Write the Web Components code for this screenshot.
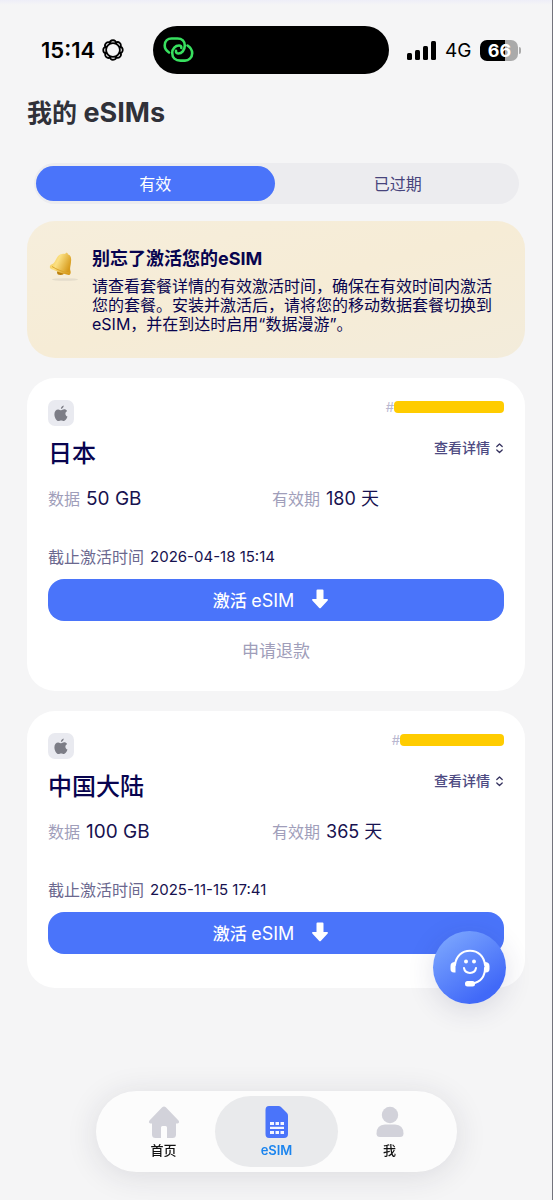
<!DOCTYPE html>
<html lang="zh-CN">
<head>
<meta charset="utf-8">
<meta name="viewport" content="width=device-width, initial-scale=1">
<title>我的 eSIMs</title>
<style>
body { margin: 0; background: #f5f5f6; font-family: Inter, "Noto Sans CJK SC", sans-serif; color: #08044f; }
</style>
</head>
<body>
<esim-app></esim-app>
<script>
const define = (name, html, setup) => {
  const template = document.createElement('template');
  template.innerHTML = html;
  customElements.define(name, class extends HTMLElement {
    constructor() {
      super();
      this.attachShadow({ mode: 'open' }).append(template.content.cloneNode(true));
    }
    connectedCallback() { if (setup) setup(this, this.shadowRoot); }
  });
};

define('status-bar', `
<style>
:host { display: grid; grid-template-columns: 1fr 236px 163px; align-items: center; height: 48px; padding: 26px 0 0; color: #000; }
.left, .right { display: flex; align-items: center; }
.left { padding-left: 41px; gap: 7px; font-size: 22px; font-weight: 600; }
.island { height: 48px; border-radius: 24px; background: #000; display: flex; align-items: center; padding-left: 10px; box-sizing: border-box; }
.right { padding-left: 18px; gap: 9px; font-size: 19px; }
.battery { display: flex; align-items: center; gap: 1px; }
.level { width: 38px; height: 21px; line-height: 21px; border-radius: 7px; background: linear-gradient(90deg, #000 66%, #aaa 66%); color: #fff; font-size: 18px; font-weight: 700; text-align: center; }
.cap { width: 2px; height: 7px; border-radius: 0 2px 2px 0; background: #aaa; }
svg { display: block; flex: none; }
</style>
<div class="left"><span>15:14</span>
<svg width="22" height="22" viewBox="-11 -11 22 22" fill="none" stroke="#000" stroke-width="1.8"><circle r="6.900"/><g id="ring"></g></svg></div>
<div class="island"><svg width="32" height="28" viewBox="0 0 32 28" fill="none" stroke="#38e05f" stroke-width="2.6" stroke-linecap="round"><path d="M6 16.500C3 14.500 1.700 11.500 1.700 9.500C1.700 5 5 2.500 8.500 2.500H14.500C19 2.500 21.800 5.500 21.800 9.500C21.800 14.500 18.500 17.500 15.500 17.500C13.800 17.500 12.800 16.500 13 14.800"/><path d="M24.500 9.500C27.500 11.500 29.200 14 29.200 17.200C29.200 21.800 25.500 24.600 22 24.600H17.500C12.500 24.600 9.200 21.500 9.200 17C9.200 12.500 12.500 9.500 16 9.500C17.800 9.500 18.500 10.500 18.300 12"/></svg></div>
<div class="right">
<svg width="29" height="19" viewBox="0 0 29 19"><rect y="12" width="5" height="7" rx="1.500"/><rect x="8" y="9" width="5" height="10" rx="1.500"/><rect x="16" y="5" width="5" height="14" rx="1.500"/><rect x="24" width="5" height="19" rx="1.500"/></svg>
<span>4G</span>
<div class="battery"><span class="level">66</span><span class="cap"></span></div>
</div>`, (host, root) => {
  const ns = 'http://www.w3.org/2000/svg';
  const ring = root.getElementById('ring');
  for (let i = 0; i < 8; i++) {
    const lobe = document.createElementNS(ns, 'path');
    lobe.setAttribute('d', 'M-3.400 -6C-3.400 -11 3.400 -11 3.400 -6');
    lobe.setAttribute('transform', 'rotate(' + i * 45 + ')');
    ring.append(lobe);
  }
});

define('segment-tabs', `
<style>
:host { display: block; margin: 0 6px 0 7px; }
div { display: grid; grid-template-columns: 1fr 1fr; gap: 4px; padding: 3px 2px; border-radius: 21px; background: #ececef; }
button { height: 35px; border: 0; border-radius: 18px; padding: 0 0 2px; background: none; font: inherit; font-size: 16px; color: #47447c; }
button[aria-selected=true] { background: #4a74fa; color: #fff; }
</style>
<div role="tablist"><button role="tab" aria-selected="true">有效</button><button role="tab" aria-selected="false">已过期</button></div>`,
(host, root) => {
  const tabs = [...root.querySelectorAll('button')];
  tabs.forEach(t => t.onclick = () => tabs.forEach(o => o.setAttribute('aria-selected', o === t)));
});

define('notice-card', `
<style>
:host { display: grid; grid-template-columns: 32px 1fr; gap: 12px; padding: 27px 21px 24px; border-radius: 28px; background: linear-gradient(165deg, #f6eedc, #f6ecd6 50%, #f3ecdb); }
svg { margin-top: 3px; }
h2 { margin: 0 0 7px; font-size: 18px; line-height: 22px; font-weight: 700; }
p { margin: 0; font-size: 16px; line-height: 19px; }
</style>
<svg width="32" height="32" viewBox="0 0 32 32"><defs><linearGradient id="g" x1="0" x2="1" y1="0" y2=".5"><stop offset="0" stop-color="#f0c040"/><stop offset=".45" stop-color="#fbe083"/><stop offset="1" stop-color="#d79b1c"/></linearGradient></defs>
<ellipse cx="17" cy="28.500" rx="13" ry="1.300" fill="#e4dccb"/><ellipse cx="12.500" cy="21.500" rx="3.500" ry="2.500" fill="#bc810f"/>
<path d="M17.300 3C17.300 1 20 1.400 19.800 3.300C23 4.500 23.500 7 23 11C22.700 15 21.500 17.500 22.500 20C23 21.500 22.600 24.600 20.500 24C14 22.500 8 20 3 18C1 17 1.800 14 3.500 13.500C6.500 12.500 7 10 8.500 7.500C11 3 14 2 17.300 3Z" fill="url(#g)"/><path d="M4 15.500C9 18.500 14 20.800 21 22" stroke="#dca52b" stroke-width="1" fill="none"/></svg>
<div><h2><slot name="title"></slot></h2><p><slot></slot></p></div>`);

define('esim-card', `
<style>
:host { display: block; padding: 22px 21px 34px; border-radius: 28px; background: #fff; }
:host([refundable]) { padding-bottom: 28px; }
.top, .name, .date, .order { display: flex; }
.top, .name { justify-content: space-between; align-items: flex-start; }
.apple { width: 26px; height: 26px; border-radius: 7px; background: #e9eaf0; display: grid; place-items: center; }
.order { align-items: center; height: 14px; font-size: 13px; color: #b9b7d0; }
.mask { width: var(--mask, 110px); height: 12px; border-radius: 4px; background: #fc0; }
h2 { margin: 0; font-size: 24px; line-height: 32px; font-weight: 500; }
.name { margin-top: 12px; }
button { font: inherit; border: 0; padding: 0; background: none; display: flex; align-items: center; }
.more { gap: 5px; font-size: 14px; font-weight: 500; line-height: 20px; color: #4d4a82; }
dl { display: grid; grid-template-columns: 224px 1fr; margin: 17px 0 0; font-size: 18px; line-height: 24px; }
dl div { display: flex; align-items: center; gap: 6px; }
dt { font-size: 16px; color: #a09eba; }
dd { margin: 0; color: #17124f; }
.volume { font-size: 19px; }
.date { align-items: center; gap: 6px; margin-top: 34px; font-size: 16px; line-height: 24px; color: #6b688f; }
time { font-size: 15px; color: #17124f; }
.go { width: 100%; height: 42px; margin-top: 10px; padding: 0 10px 2px 0; box-sizing: border-box; justify-content: center; gap: 17px; border-radius: 16px; background: #4a74fa; color: #fff; font-size: 17px; font-weight: 500; }
.go .latin { font-size: 18px; font-weight: 400; }
.refund { display: none; margin: 18px auto 0; font-size: 17px; line-height: 24px; color: #a09eba; }
:host([refundable]) .refund { display: block; }
</style>
<div class="top"><span class="apple"><svg width="14" height="17" viewBox="0 0 14 17" fill="#7c7d86"><path d="M9.700 .5C9.800 2.300 8.500 3.900 6.900 3.900C6.800 2.300 8.100 .8 9.700 .5ZM10.100 4.300C11.400 4.300 12.500 5 13.100 5.900C10.600 7.400 11 10.500 13.500 11.600C12.700 13.900 11.400 16 9.900 16C8.800 16 8.400 15.400 7.200 15.400C5.900 15.400 5.500 16 4.500 16C2.500 16 .4 12.500 .4 9.200C.4 6.200 2.200 4.400 4.200 4.400C5.500 4.400 6.300 5.200 7.200 5.200C8 5.200 8.900 4.300 10.100 4.300Z"/></svg></span>
<span class="order">#<span class="mask"></span></span></div>
<div class="name"><h2><slot name="region"></slot></h2><button class="more">查看详情<svg width="9" height="12" viewBox="0 0 9 12" fill="none" stroke="#35325f" stroke-width="1.300" stroke-linecap="round" stroke-linejoin="round"><path d="M1.800 4.500L4.500 2L7.200 4.500M1.800 8L4.500 10.500L7.200 8"/></svg></button></div>
<dl><div><dt>数据</dt><dd class="volume"><slot name="data"></slot></dd></div><div><dt>有效期</dt><dd><slot name="days"></slot></dd></div></dl>
<div class="date"><span>截止激活时间</span><time><slot name="deadline"></slot></time></div>
<button class="go"><span>激活 <span class="latin">eSIM</span></span><svg width="18" height="20" viewBox="0 0 18 20" fill="#fff"><path d="M6.500 .5H11.500Q12.500 .5 12.500 1.500V10H16.200Q17.500 10.300 16.700 11.400L10 18.700Q9 19.700 8 18.700L1.300 11.400Q.5 10.300 1.800 10H5.500V1.500Q5.500 .5 6.500 .5Z"/></svg></button>
<button class="refund">申请退款</button>`);

define('support-button', `
<style>
:host { position: fixed; right: 47px; bottom: 196px; }
button { width: 73px; height: 73px; border: 0; padding: 0; border-radius: 50%; display: grid; place-items: center; background: linear-gradient(145deg, #82adff, #4169f8 80%); box-shadow: 0 6px 28px rgba(40, 45, 90, .14); }
</style>
<button aria-label="客服"><svg width="40" height="38" viewBox="0 0 40 38" fill="none" stroke="#fff" stroke-width="2" stroke-linecap="round"><path d="M5 16C6 7 12 1.800 20 1.800C28 1.800 34 7 35 16M35 19C35 28 30 33 22.500 34.500"/><path d="M14 19C15 25.500 25 25.500 26 19" stroke-width="2"/><g fill="#fff" stroke="none"><circle cx="16" cy="12.500" r="2"/><circle cx="24" cy="12.500" r="2"/><path d="M5.500 13V23.500H4C1.500 23.500 .5 22 .5 20V17C.5 14.500 2 13 5.500 13ZM34.500 13V23.500H36C38.500 23.500 39.500 22 39.500 20V17C39.500 14.500 38 13 34.500 13Z"/><rect x="15" y="32" width="10" height="5.500" rx="2.500"/></g></svg></button>`);

define('tab-bar', `
<style>
:host { position: fixed; left: 96px; right: 96px; bottom: 28px; }
nav { display: grid; grid-template-columns: 1fr 1fr 1fr; box-sizing: border-box; height: 81px; padding: 5px 11px; border-radius: 41px; background: #fcfcfc; box-shadow: 0 4px 32px rgba(30, 30, 60, .12); }
a { display: flex; flex-direction: column; align-items: center; gap: 3px; margin: 0 -5px; padding-top: 10px; border-radius: 36px; color: #111; font-size: 13px; line-height: 18px; font-weight: 500; text-decoration: none; }
a[aria-current] { background: #e9eaec; color: #1b84ee; font-weight: 600; }
svg { display: block; fill: #d2d2da; }
</style>
<nav>
<a href="#home"><svg width="32" height="32" viewBox="0 0 32 32"><path d="M14.200 1.300Q16 -.3 17.800 1.300L30.500 14.500Q32 17 29.500 17.500H28V28.500Q28 32 24.500 32H19V21.500Q19 20 17.500 20H14.500Q13 20 13 21.500V32H7.500Q4 32 4 28.500V17.500H2.500Q0 17 1.500 14.500Z"/></svg>首页</a>
<a href="#esim" aria-current="page"><svg width="24" height="32" viewBox="0 0 24 32"><path fill="#4a74fa" d="M4 0H13.500Q15 0 16 1L22 7Q23 8 23 9.500V28Q23 32 19 32H4Q.5 32 .5 28V4Q.5 0 4 0Z"/><path fill="#f4f6ff" d="M5 16H9V19H5ZM10.500 16H14V19H10.500ZM15.500 16H19V19H15.500ZM5 20.800H19V23H5ZM5 25H9V28H5ZM10.500 25H14V28H10.500ZM15.500 25H19V28H15.500Z"/></svg>eSIM</a>
<a href="#me"><svg width="28" height="32" viewBox="0 0 28 32"><circle cx="14" cy="9" r="8.200"/><path d="M9 18.500H19Q27.500 19 27.500 27.500Q27.500 31 24 31H4Q.5 31 .5 27.500Q.5 19 9 18.500Z"/></svg>我</a>
</nav>`);

define('esim-app', `
<style>
:host { display: block; min-height: 100vh; box-sizing: border-box; padding-bottom: 140px; border-right: 1px solid #73737c; background: linear-gradient(#eeeef8, #f5f5f6 5px, #f5f5f6); }
h1 { margin: 21px 27px 32px; font-size: 27px; line-height: 36px; font-weight: 700; color: #303139; }
.zh { font-size: 25px; }
main { display: grid; gap: 20px; margin-top: 17px; }
section { padding: 0 27px; }
</style>
<status-bar></status-bar>
<h1><span class="zh">我的</span> eSIMs</h1>
<section>
<segment-tabs></segment-tabs>
<main>
<notice-card><span slot="title">别忘了激活您的eSIM</span>请查看套餐详情的有效激活时间，确保在有效时间内激活您的套餐。安装并激活后，请将您的移动数据套餐切换到eSIM，并在到达时启用“数据漫游”。</notice-card>
<esim-card refundable><span slot="region">日本</span><span slot="data">50 GB</span><span slot="days">180 天</span><span slot="deadline">2026-04-18 15:14</span></esim-card>
<esim-card style="--mask: 104px"><span slot="region">中国大陆</span><span slot="data">100 GB</span><span slot="days">365 天</span><span slot="deadline">2025-11-15 17:41</span></esim-card>
</main>
</section>
<support-button></support-button>
<tab-bar></tab-bar>`);
</script>
</body>
</html>
